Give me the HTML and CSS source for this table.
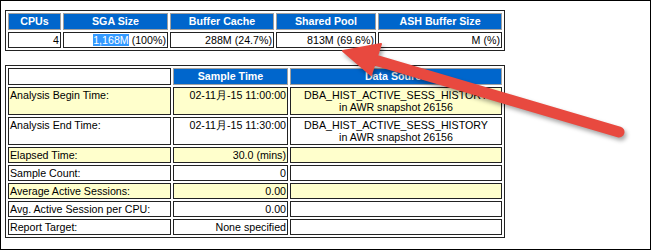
FILE: index.html
```html
<html>
<head>
    <title>ASH Report</title>
    <link rel="stylesheet" href="styles.css">
</head>
<body>
    <div class="frame">
        <table class="awr sga">
            <tr>
                <th class="c-cpu">CPUs</th>
                <th class="c-sga">SGA Size</th>
                <th class="c-buf">Buffer Cache</th>
                <th class="c-pool">Shared Pool</th>
                <th class="c-ash">ASH Buffer Size</th>
            </tr>
            <tr>
                <td class="num">4</td>
                <td class="num"><span class="sel">1,168M</span> (100%)</td>
                <td class="num">288M (24.7%)</td>
                <td class="num">813M (69.6%)</td>
                <td class="num">M (%)</td>
            </tr>
        </table>

        <table class="awr times">
            <tr>
                <th class="nobg c-label"></th>
                <th class="c-time">Sample Time</th>
                <th class="c-src">Data Source</th>
            </tr>
            <tr class="alt">
                <td>Analysis Begin Time:</td>
                <td class="num">02-11月-15 11:00:00</td>
                <td class="mid">DBA_HIST_ACTIVE_SESS_HISTORY<br>in AWR snapshot 26156</td>
            </tr>
            <tr>
                <td>Analysis End Time:</td>
                <td class="num">02-11月-15 11:30:00</td>
                <td class="mid">DBA_HIST_ACTIVE_SESS_HISTORY<br>in AWR snapshot 26156</td>
            </tr>
            <tr class="alt">
                <td>Elapsed Time:</td>
                <td class="num">30.0 (mins)</td>
                <td></td>
            </tr>
            <tr>
                <td>Sample Count:</td>
                <td class="num">0</td>
                <td></td>
            </tr>
            <tr class="alt">
                <td>Average Active Sessions:</td>
                <td class="num">0.00</td>
                <td></td>
            </tr>
            <tr>
                <td>Avg. Active Session per CPU:</td>
                <td class="num">0.00</td>
                <td></td>
            </tr>
            <tr>
                <td>Report Target:</td>
                <td class="num">None specified</td>
                <td></td>
            </tr>
        </table>

        <!-- red callout pointing at the shared pool figure -->
        <svg class="arrow" width="652" height="251" viewBox="0 0 652 251">
            <line x1="619" y1="132" x2="368" y2="58" stroke="#e8493f" stroke-width="11" stroke-linecap="round"/>
            <polygon points="343,51 381,44 371,75" fill="#e8493f" stroke="#e8493f" stroke-width="2" stroke-linejoin="round"/>
        </svg>
    </div>
</body>
</html>
```

FILE: styles.css
```css
body {
    margin: 0;
    background: white;
    font-family: "Liberation Sans", Arial, Helvetica, sans-serif;
}
.frame {
    position: relative;
    box-sizing: border-box;
    width: 651px;
    height: 250px;
    border: 1px solid #000;
    padding: 9px 0 0 4px;
}
table.awr {
    width: 500px;
    table-layout: fixed;
    border: 1px solid #222;
    border-spacing: 2px;
    font-size: 8pt;
}
table.times {
    margin-top: 14px;
}
th, td {
    box-sizing: border-box;
    line-height: 12px;
}
th {
    font-weight: bold;
    color: white;
    background: #0066cc;
    border: 1px solid #a0a0a0;
    padding: 1px 4px 2px 4px;
    text-align: center;
}
th.nobg {
    background: white;
    border-color: #222;
}
td {
    color: black;
    background: white;
    border: 1px solid #222;
    padding: 1px;
    vertical-align: top;
    height: 16px;
}
tr.alt td {
    background: #ffffcc;
}
td.num {
    text-align: right;
}
td.mid {
    text-align: center;
}
.sel {
    background: #3399ff;
    color: white;
}
.c-cpu { width: 53px; }
.c-sga { width: 105px; }
.c-buf { width: 104px; }
.c-pool { width: 100px; }
.c-ash { width: 124px; }
.c-label { width: 163px; }
.c-time { width: 115px; }
.c-src { width: 212px; }
.arrow {
    position: absolute;
    left: -1px;
    top: -1px;
    pointer-events: none;
    filter: drop-shadow(2px 3px 2px rgba(0, 0, 0, 0.35));
}
```
